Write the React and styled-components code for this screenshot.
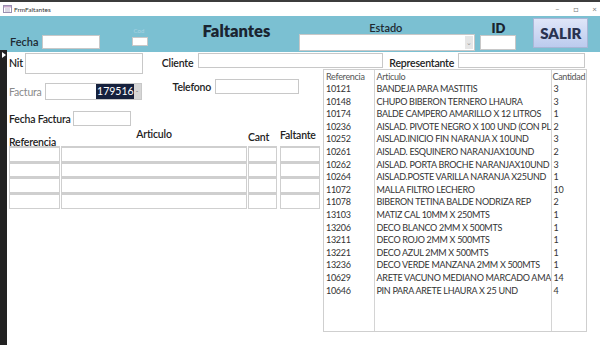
import React from "react"
import styled, { createGlobalStyle } from "styled-components"

const GlobalStyle = createGlobalStyle`
  html, body {
    margin: 0;
    padding: 0;
    background: #fff;
    font-family: "Lato", "Open Sans", sans-serif;
    color: #222;
  }
`

// visible part of each row, as the list box shows it
const items = [
  ["10121", "BANDEJA PARA MASTITIS", "3"],
  ["10148", "CHUPO BIBERON TERNERO LHAURA", "3"],
  ["10174", "BALDE CAMPERO AMARILLO X 12 LITROS", "1"],
  ["10236", "AISLAD. PIVOTE NEGRO X 100 UND (CON PL", "2"],
  ["10252", "AISLAD.INICIO FIN NARANJA X 10UND", "3"],
  ["10261", "AISLAD. ESQUINERO NARANJAX10UND", "2"],
  ["10262", "AISLAD. PORTA BROCHE NARANJAX10UND", "3"],
  ["10264", "AISLAD.POSTE VARILLA NARANJA X25UND", "1"],
  ["11072", "MALLA FILTRO LECHERO", "10"],
  ["11078", "BIBERON TETINA BALDE NODRIZA REP", "2"],
  ["13103", "MATIZ CAL 10MM X 250MTS", "1"],
  ["13206", "DECO BLANCO 2MM X 500MTS", "1"],
  ["13211", "DECO ROJO 2MM X 500MTS", "1"],
  ["13221", "DECO AZUL 2MM X 500MTS", "1"],
  ["13236", "DECO VERDE MANZANA 2MM X 500MTS", "1"],
  ["10629", "ARETE VACUNO MEDIANO MARCADO AMA", "14"],
  ["10646", "PIN PARA ARETE LHAURA X 25 UND", "4"]
]

export default function App() {
  return (
    <Window>
      <GlobalStyle />
      <TitleBar>
        <FormIcon>
          <svg width="9" height="8" viewBox="0 0 9 8">
            <rect x="0.5" y="0.5" width="8" height="7" fill="#fff" stroke="#9a8fb0" />
            <rect x="1" y="1" width="7" height="1.5" fill="#c7a6c9" />
            <line x1="2" y1="4" x2="7" y2="4" stroke="#b8b0c8" />
            <line x1="2" y1="6" x2="7" y2="6" stroke="#b8b0c8" />
          </svg>
        </FormIcon>
        <TitleText>FrmFaltantes</TitleText>
        <WinControls>
          <span>–</span>
          <span>□</span>
          <span>×</span>
        </WinControls>
      </TitleBar>

      <Header>
        <FieldRow top={19} left={10}>
          <HeadLabel>Fecha</HeadLabel>
          <Input w={58} h={14} />
        </FieldRow>
        <Stack top={10} left={32}>
          <CodLabel>Cod</CodLabel>
          <Input w={16} h={9} />
        </Stack>
        <Title>Faltantes</Title>
        <Stack top={6} left={29} center>
          <HeadLabel>Estado</HeadLabel>
          <Combo>
            <ComboArrow>⌄</ComboArrow>
          </Combo>
        </Stack>
        <Stack top={5} left={5} center>
          <IdLabel>ID</IdLabel>
          <Input w={36} h={15} />
        </Stack>
        <ExitButton>SALIR</ExitButton>
      </Header>

      <Body>
        <Strip>
          <StripArrow />
        </Strip>
        <Main>
          <TopRow>
            <Label left={2} top={4}>Nit</Label>
            <Input w={118} h={21} ml={2} />
            <Label left={19} top={4}>Cliente</Label>
            <Input w={185} h={15} ml={5} />
            <Label left={6} top={4}>Representante</Label>
            <Input w={127} h={15} ml={4} />
          </TopRow>

          <Lower>
            <LeftCol>
              <FormRow>
                <FieldRow top={14} left={2}>
                  <Label muted>Factura</Label>
                  <FacturaBox>
                    <Selected>179516</Selected>
                    <Spin>-</Spin>
                  </FacturaBox>
                </FieldRow>
                <FieldRow top={10} left={31}>
                  <Label>Telefono</Label>
                  <Input w={84} h={15} ml={4} />
                </FieldRow>
              </FormRow>
              <FieldRow top={11} left={2}>
                <Label>Fecha Factura</Label>
                <Input w={58} h={15} ml={2} />
              </FieldRow>

              <Grid>
                <GridHead align="left" top={8}>Referencia</GridHead>
                <GridHead align="center" top={0}>Articulo</GridHead>
                <GridHead align="left" top={3}>Cant</GridHead>
                <GridHead align="left" top={1}>Faltante</GridHead>
                {[0, 1, 2, 3].map(i => (
                  <React.Fragment key={i}>
                    <Cell />
                    <Cell />
                    <Cell />
                    <Cell />
                  </React.Fragment>
                ))}
              </Grid>
            </LeftCol>

            <ListBox>
              <ListTable>
                <colgroup>
                  <col style={{ width: 50 }} />
                  <col style={{ width: 177 }} />
                  <col />
                </colgroup>
                <thead>
                  <tr>
                    <Th>Referencia</Th>
                    <Th>Articulo</Th>
                    <Th>Cantidad</Th>
                  </tr>
                </thead>
                <tbody>
                  {items.map(([ref, art, qty]) => (
                    <tr key={ref}>
                      <Td>{ref}</Td>
                      <Td>{art}</Td>
                      <Td>{qty}</Td>
                    </tr>
                  ))}
                  <tr>
                    <Filler />
                    <Filler />
                    <Filler />
                  </tr>
                </tbody>
              </ListTable>
            </ListBox>
          </Lower>
        </Main>
      </Body>
    </Window>
  )
}

const Window = styled.div`
  width: 600px;
  height: 345px;
  display: flex;
  flex-direction: column;
  overflow: hidden;
  border-top: 2px solid #3c3c3c;
  box-sizing: border-box;
`

const TitleBar = styled.div`
  height: 14px;
  display: flex;
  align-items: center;
  padding-left: 3px;
  background: #fff;
`

const FormIcon = styled.span`
  display: flex;
  margin-right: 2px;
`

const TitleText = styled.span`
  font-size: 6.5px;
  color: #333;
`

const WinControls = styled.div`
  margin-left: auto;
  display: flex;
  gap: 14px;
  padding-right: 3px;
  font-size: 8px;
  color: #777;
`

const Header = styled.div`
  height: 36px;
  background: #7bc0d2;
  display: flex;
  align-items: flex-start;
  flex-shrink: 0;
`

const FieldRow = styled.div`
  display: flex;
  align-items: center;
  margin-top: ${p => p.top || 0}px;
  margin-left: ${p => p.left || 0}px;
`

const Stack = styled.div`
  display: flex;
  flex-direction: column;
  align-items: ${p => (p.center ? "center" : "flex-start")};
  margin-top: ${p => p.top || 0}px;
  margin-left: ${p => p.left || 0}px;
`

const HeadLabel = styled.span`
  font-size: 11px;
  font-weight: 600;
  color: #1e2a33;
  margin-right: 3px;
  line-height: 11px;
  margin-bottom: 1px;
`

const CodLabel = styled.span`
  font-size: 6px;
  color: #a8d4e2;
  line-height: 10px;
  margin-left: 2px;
  margin-bottom: 1px;
`

const IdLabel = styled.span`
  font-size: 13px;
  font-weight: 800;
  color: #1a2430;
  line-height: 14px;
`

const Title = styled.h1`
  margin: 5px 0 0 55px;
  font-size: 16.5px;
  font-weight: 800;
  color: #1a2430;
  line-height: 20px;
`

const Input = styled.div`
  width: ${p => p.w}px;
  height: ${p => p.h}px;
  margin-left: ${p => p.ml || 0}px;
  background: #fff;
  border: 1px solid #c8c8c8;
  box-sizing: border-box;
  flex-shrink: 0;
`

const Combo = styled.div`
  width: 176px;
  height: 17px;
  background: #fff;
  border: 1px solid #c8c8c8;
  box-sizing: border-box;
  display: flex;
  justify-content: flex-end;
`

const ComboArrow = styled.span`
  width: 8px;
  background: #e6e6e6;
  color: #999;
  font-size: 7px;
  display: flex;
  align-items: center;
  justify-content: center;
  margin: 1px;
`

const ExitButton = styled.button`
  margin: 2px 0 0 17px;
  width: 55px;
  height: 30px;
  border: 1px solid #a9b6d6;
  background: linear-gradient(#dfe6f8, #bccbee);
  font-family: "Lato", sans-serif;
  font-size: 15px;
  font-weight: 800;
  color: #2a3350;
  padding: 0;
`

const Body = styled.div`
  flex: 1;
  display: flex;
  margin-top: -2px;
`

const Strip = styled.div`
  width: 7px;
  background: #222;
  flex-shrink: 0;
  padding-top: 2px;
`

const StripArrow = styled.div`
  width: 0;
  height: 0;
  margin-left: 2px;
  border-top: 3px solid transparent;
  border-bottom: 3px solid transparent;
  border-left: 4px solid #fff;
`

const Main = styled.div`
  flex: 1;
  padding-top: 3px;
  display: flex;
  flex-direction: column;
`

const TopRow = styled.div`
  height: 16px;
  display: flex;
  align-items: flex-start;
`

const Label = styled.span`
  font-size: 10.5px;
  letter-spacing: -0.2px;
  font-weight: ${p => (p.muted ? 400 : 600)};
  color: ${p => (p.muted ? "#8a8a8a" : "#222")};
  margin-left: ${p => p.left || 0}px;
  margin-top: ${p => p.top || 0}px;
  line-height: 12px;
  white-space: nowrap;
`

const Lower = styled.div`
  display: flex;
  flex: 1;
`

const LeftCol = styled.div`
  width: 316px;
  display: flex;
  flex-direction: column;
`

const FormRow = styled.div`
  display: flex;
  align-items: flex-start;
`

const FacturaBox = styled.div`
  width: 97px;
  height: 17px;
  margin-left: 3px;
  border: 1px solid #c8c8c8;
  box-sizing: border-box;
  display: flex;
  justify-content: flex-end;
  align-items: stretch;
  background: #fff;
`

const Selected = styled.span`
  background: #16213d;
  color: #fff;
  font-size: 10.5px;
  line-height: 15px;
  padding: 0 0 0 1px;
`

const Spin = styled.span`
  width: 7px;
  background: #d6d6d6;
  color: #777;
  font-size: 7px;
  text-align: center;
  line-height: 15px;
`

const Grid = styled.div`
  display: grid;
  grid-template-columns: 51px 186px 29px 42px;
  grid-auto-rows: 15.8px;
  column-gap: 1px;
  margin: 4px 0 0 2px;
  & > :nth-child(4n + 4) {
    margin-left: 2px;
  }
`

const GridHead = styled.div`
  height: 14px;
  font-size: 10.5px;
  letter-spacing: -0.2px;
  font-weight: 600;
  text-align: ${p => p.align};
  padding-top: ${p => p.top}px;
  line-height: 8px;
  white-space: nowrap;
  box-sizing: border-box;
`

const Cell = styled.div`
  border: 1px solid #cfcfcf;
  border-top-width: 2px;
  background: #fff;
`

const ListBox = styled.div`
  width: 264px;
  height: 263px;
  border: 1px solid #cfcfcf;
  box-sizing: border-box;
  overflow: hidden;
`

const ListTable = styled.table`
  width: 100%;
  height: 100%;
  table-layout: fixed;
  border-collapse: collapse;
  font-size: 9px;
  letter-spacing: -0.3px;
  color: #333;
`

const Th = styled.th`
  font-weight: 400;
  text-align: left;
  color: #555;
  padding: 0 0 0 2px;
  height: 13px;
  line-height: 13px;
  white-space: nowrap;
  overflow: hidden;
  border-left: 1px solid #d4d4d4;
  &:first-child {
    border-left: none;
  }
  &:last-child {
    padding-left: 1px;
    letter-spacing: -0.35px;
  }
`

const Td = styled.td`
  padding: 0 0 0 2px;
  height: 12.6px;
  line-height: 12.6px;
  white-space: nowrap;
  overflow: hidden;
  border-left: 1px solid #d4d4d4;
  &:first-child {
    border-left: none;
  }
`

const Filler = styled.td`
  border-left: 1px solid #d4d4d4;
  &:first-child {
    border-left: none;
  }
`
